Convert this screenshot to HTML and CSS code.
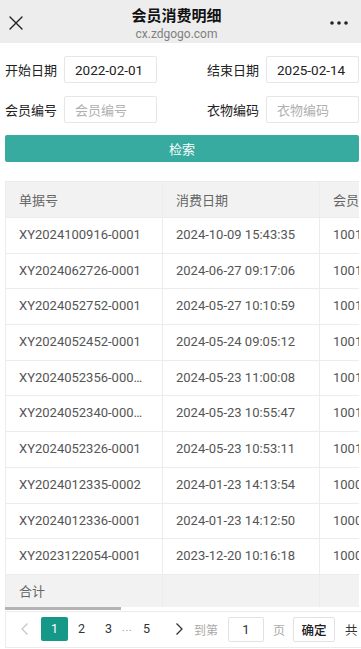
FILE: index.html
```html
<!DOCTYPE html>
<html lang="zh-CN">
<head>
  <meta charset="UTF-8" />
  <meta name="viewport" content="width=device-width, initial-scale=1.0" />
  <title>会员消费明细</title>
  <link rel="stylesheet" href="styles.css">
</head>
<body>

  <div class="topbar">
    <svg class="close" width="14" height="14" viewBox="0 0 14 14">
      <path d="M1 1 L13 13 M13 1 L1 13" stroke="#222" stroke-width="1.4" fill="none" stroke-linecap="round" />
    </svg>
    <div class="titles">
      <div class="title">会员消费明细</div>
      <div class="domain">cx.zdgogo.com</div>
    </div>
    <svg class="more" width="18" height="4" viewBox="0 0 18 4">
      <circle cx="2" cy="2" r="1.8" fill="#222" />
      <circle cx="9" cy="2" r="1.8" fill="#222" />
      <circle cx="16" cy="2" r="1.8" fill="#222" />
    </svg>
  </div>

  <div class="search">
    <div class="search-row">
      <div class="field">
        <label>开始日期</label>
        <input type="text" value="2022-02-01">
      </div>
      <div class="field">
        <label>结束日期</label>
        <input type="text" value="2025-02-14">
      </div>
    </div>
    <div class="search-row">
      <div class="field">
        <label>会员编号</label>
        <input type="text" placeholder="会员编号">
      </div>
      <div class="field">
        <label>衣物编码</label>
        <input type="text" placeholder="衣物编码">
      </div>
    </div>
    <button class="btn-search">检索</button>
  </div>

  <div class="table-box">
    <div class="table-wrap" id="tableWrap">
      <div class="grid" id="grid">
        <div class="grid-row head">
          <div class="cell">单据号</div>
          <div class="cell">消费日期</div>
          <div class="cell">会员编号</div>
          <div class="cell">会员姓名</div>
          <div class="cell">衣物编码</div>
          <div class="cell">消费金额</div>
          <div class="cell last">备注</div>
        </div>
        <div id="rows"></div>
        <div class="grid-row foot">
          <div class="cell">合计</div>
          <div class="cell"></div><div class="cell"></div><div class="cell"></div>
          <div class="cell"></div><div class="cell"></div><div class="cell last"></div>
        </div>
      </div>
    </div>
    <div class="scroll-track"><div class="scroll-thumb" id="thumb"></div></div>
  </div>

  <div class="pager">
    <span class="arrow prev">
      <svg width="7" height="12" viewBox="0 0 7 12"><path d="M6.5 0.5 L1 6 L6.5 11.5" stroke="#c4c4c4" stroke-width="1.1" fill="none" /></svg>
    </span>
    <span class="page active">1</span>
    <span class="page">2</span>
    <span class="page">3</span>
    <span class="dots">...</span>
    <span class="page">5</span>
    <span class="arrow next">
      <svg width="7" height="12" viewBox="0 0 7 12"><path d="M0.5 0.5 L6 6 L0.5 11.5" stroke="#333" stroke-width="1.3" fill="none" /></svg>
    </span>
    <span class="muted">到第</span>
    <input class="jump" type="text" value="1">
    <span class="muted">页</span>
    <button class="btn-go">确定</button>
    <span class="total">共 5 页</span>
  </div>

  <script>
    const data = [
      ["XY2024100916-0001", "2024-10-09 15:43:35", "10012"],
      ["XY2024062726-0001", "2024-06-27 09:17:06", "10012"],
      ["XY2024052752-0001", "2024-05-27 10:10:59", "10011"],
      ["XY2024052452-0001", "2024-05-24 09:05:12", "10011"],
      ["XY2024052356-00012", "2024-05-23 11:00:08", "10011"],
      ["XY2024052340-00012", "2024-05-23 10:55:47", "10011"],
      ["XY2024052326-0001", "2024-05-23 10:53:11", "10011"],
      ["XY2024012335-0002", "2024-01-23 14:13:54", "10008"],
      ["XY2024012336-0001", "2024-01-23 14:12:50", "10008"],
      ["XY2023122054-0001", "2023-12-20 10:16:18", "10008"]
    ];

    const rows = document.getElementById("rows");
    data.forEach(row => {
      const div = document.createElement("div");
      div.className = "grid-row";
      const cells = [row[0], row[1], row[2], "", "", "", ""];
      cells.forEach((text, i) => {
        const cell = document.createElement("div");
        cell.className = i === 6 ? "cell last" : "cell";
        cell.textContent = text;
        div.appendChild(cell);
      });
      rows.appendChild(div);
    });

    // scroll indicator
    const wrap = document.getElementById("tableWrap");
    const thumb = document.getElementById("thumb");
    function updateThumb() {
      const ratio = wrap.clientWidth / wrap.scrollWidth;
      thumb.style.width = (wrap.clientWidth * ratio) + "px";
      thumb.style.marginLeft = (wrap.scrollLeft * ratio) + "px";
    }
    wrap.addEventListener("scroll", updateThumb);
    updateThumb();
  </script>
</body>
</html>
```

FILE: styles.css
```css
body {
  margin: 0;
  background: #fff;
  color: #333;
  font-family: Roboto, "Noto Sans CJK SC", sans-serif;
  font-size: 13px;
}

.topbar {
  height: 43px;
  background: #ededed;
  display: flex;
  align-items: center;
  justify-content: space-between;
  padding: 0 13px 0 9px;
}

.close {
  margin-top: 3px;
}

.titles {
  text-align: center;
  margin-top: 5px;
}

.title {
  font-size: 15px;
  font-weight: bold;
  color: #111;
  line-height: 20px;
}

.domain {
  font-size: 12px;
  color: #808080;
  line-height: 17px;
}

.more {
  margin-top: 2px;
}

.search {
  padding: 13px 2px 0 4px;
}

.search-row {
  display: flex;
  justify-content: space-between;
  margin-bottom: 13px;
}

.search-row + .search-row {
  margin-bottom: 12px;
}

.field {
  display: flex;
  align-items: center;
  gap: 7px;
}

.field label {
  color: #222;
  font-size: 13px;
  width: 52px;
  padding-left: 1px;
}

.field input {
  box-sizing: border-box;
  width: 93px;
  height: 27px;
  border: 1px solid #e6e6e6;
  border-radius: 2px;
  padding: 0 10px;
  font-family: Roboto, "Noto Sans CJK SC", sans-serif;
  font-size: 13.5px;
  color: #222;
  outline: none;
}

.field input::placeholder {
  color: #b0b0b0;
  font-size: 13px;
}

.btn-search {
  display: block;
  width: 354px;
  height: 27px;
  margin: 0 0 0 1px;
  border: none;
  border-radius: 2px;
  background: #37ab9f;
  color: #fff;
  font-family: Roboto, "Noto Sans CJK SC", sans-serif;
  font-size: 13px;
}

.table-box {
  margin: 19px 0 0 5px;
  width: 354px;
}

.table-wrap {
  overflow-x: auto;
  scrollbar-width: none;
  border-top: 1px solid #ececec;
  border-left: 1px solid #ececec;
}

.table-wrap::-webkit-scrollbar {
  display: none;
}

.grid {
  width: 1071px;
}

.grid-row {
  display: flex;
  box-sizing: border-box;
  height: 35.7px;
  border-bottom: 1px solid #ececec;
  color: #555;
}

.grid-row.head {
  height: 36px;
  background: #f2f2f2;
  color: #666;
}

.grid-row.foot {
  height: 32px;
  background: #f2f2f2;
  color: #666;
  border-bottom: none;
}

.cell {
  box-sizing: border-box;
  flex: 0 0 157px;
  display: flex;
  align-items: center;
  padding: 0 15px 0 13px;
  border-right: 1px solid #ececec;
  white-space: nowrap;
  overflow: hidden;
}

.grid-row:not(.head):not(.foot) .cell {
  display: block;
  line-height: 34.7px;
  text-overflow: ellipsis;
}

.cell.last {
  flex-basis: 129px;
}

.scroll-track {
  height: 4px;
  background: #fff;
}

.scroll-thumb {
  height: 3px;
  background: #b4b4b4;
}

.pager {
  margin-left: 5px;
  height: 37px;
  box-sizing: border-box;
  border: 1px solid #ececec;
  border-right: none;
  display: flex;
  align-items: center;
  padding-left: 15px;
  white-space: nowrap;
  overflow: hidden;
  color: #333;
}

.pager > * {
  flex-shrink: 0;
}

.arrow {
  display: flex;
  align-items: center;
}

.arrow.prev {
  width: 20px;
}

.arrow.next {
  margin-left: 16px;
  margin-right: 11px;
}

.page {
  width: 27px;
  height: 24px;
  line-height: 24px;
  text-align: center;
  font-size: 12.5px;
  border-radius: 2px;
}

.page.active {
  background: #159888;
  color: #fff;
}

.dots {
  color: #999;
  font-size: 11px;
  letter-spacing: 0.5px;
  width: 11px;
  margin-bottom: 3px;
}

.muted {
  color: #aaa;
  font-size: 12px;
}

.jump {
  box-sizing: border-box;
  width: 36px;
  height: 25px;
  margin: 0 9px 0 10px;
  border: 1px solid #e2e2e2;
  border-radius: 2px;
  text-align: center;
  font-family: Roboto, "Noto Sans CJK SC", sans-serif;
  font-size: 13px;
  color: #333;
  outline: none;
}

.btn-go {
  box-sizing: border-box;
  height: 25px;
  width: 42px;
  margin-left: 8px;
  padding: 0;
  border: 1px solid #e2e2e2;
  border-radius: 2px;
  background: #fff;
  font-family: Roboto, "Noto Sans CJK SC", sans-serif;
  font-size: 12.5px;
  font-weight: 500;
  color: #222;
}

.total {
  margin-left: 10px;
  font-size: 12.5px;
  color: #333;
}
```
